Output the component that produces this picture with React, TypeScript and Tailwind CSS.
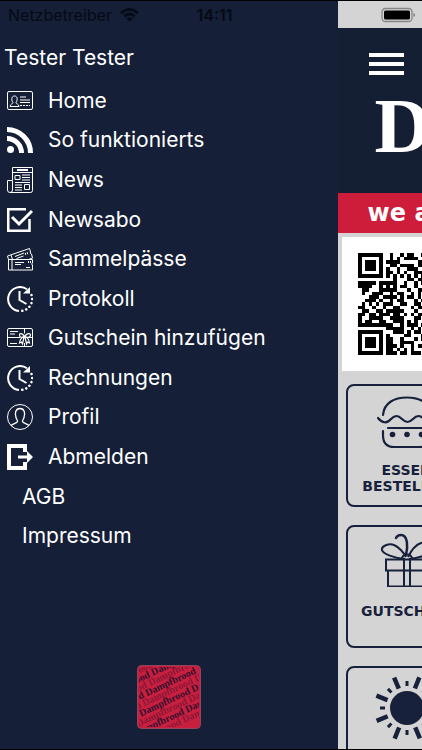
import React from 'react';

const HomeIcon = () => (
  <svg viewBox="0 0 26 26" className="size-[26px]" fill="none" stroke="currentColor" strokeWidth="1">
    <rect x="0.5" y="3.5" width="25" height="18" rx="1.5" />
    <path d="M3 18.5c0-2.5 3-2.5 3-4-1.6-1.5-2-6.500 1.500-6.500s3 5 1.500 6.500c0 1.500 3 1.500 3 4z" />
    <path d="M13 9h6M13 12h10M13 14.500h10" />
    <path d="M13 17.500h10" strokeDasharray="2 1" />
  </svg>
);

const FeedIcon = () => (
  <svg viewBox="0 0 26 26" className="size-[26px]" fill="none" stroke="currentColor" strokeWidth="5">
    <circle cx="3.500" cy="22.500" r="3.500" fill="currentColor" stroke="none" />
    <path d="M0 11.500A14.500 14.500 0 0 1 14.500 26M0 2.500A23.500 23.500 0 0 1 23.500 26" />
  </svg>
);

const NewsIcon = () => (
  <svg viewBox="0 0 26 26" className="size-[26px]" fill="none" stroke="currentColor" strokeWidth="1">
    <path d="M5.500 0.500h20v23q0 2-2 2H3q-2.500 0-2.500-2.500V13.500h5V23q0 2.500-2.500 2.500" />
    <path d="M5.500 13V0.500M5.500 5.500h20M8 8.500h5v4H8zM17.500 17.500h5v5h-5z" />
    <path d="M10 3h11" strokeWidth="2" />
    <path d="M15 8h8M15 10.500h8M15 13h8M8 15.500h15M8 18h7M8 20.500h7M8 23h7" />
  </svg>
);

const CheckIcon = () => (
  <svg viewBox="0 0 26 26" className="size-[26px]" fill="none" stroke="currentColor" strokeWidth="2.500">
    <path d="M19 2.250H1.250v21.500H22.500V12" />
    <path d="M5 10l7 7L25 4" strokeWidth="3" />
  </svg>
);

const PassIcon = () => (
  <svg viewBox="0 0 26 26" className="size-[26px]" fill="none" stroke="currentColor" strokeWidth="1">
    <path d="M1.500 13.500h24v3.500q-2 1 0 2v5h-24zM5 13.500v10.500" />
    <path d="M1.500 13.500L0.500 10 22.500 2.500l1 3.500q-1 1.500 1 2l1 4-4 1.500M4 9l1.500 4.500M8 10.500l9-3.500M9.500 12.500l7-2.500" />
    <path d="M8 16.500h9M8 18.500h6M19 21.500h4" />
    <path d="M21 16h3M18 8l3-1" strokeWidth="2" strokeDasharray="1 1" />
  </svg>
);

const ClockIcon = () => (
  <svg viewBox="0 0 26 26" className="size-[26px]" fill="none" stroke="currentColor" strokeWidth="2">
    <path d="M12 25A12 12 0 1 1 20 3.200" />
    <path d="M23 1v6.500h-7z" fill="currentColor" stroke="none" />
    <path d="M12.500 5v9l7 4" />
    <path d="M24.500 9A12 12 0 0 1 14 25" strokeWidth="2.500" strokeLinecap="round" strokeDasharray="0.100 4" />
  </svg>
);

const VoucherIcon = () => (
  <svg viewBox="0 0 26 26" className="size-[26px]" fill="none" stroke="currentColor" strokeWidth="1">
    <rect x="0.500" y="3.500" width="25" height="18" rx="1.500" />
    <path d="M3 6.500h8M3 9h5M0.500 12.500H13M21 12.500h4.500M17.500 3.500v5M17.500 18v3.500M3 18.500h7" />
    <g strokeWidth="1.200">
      <path d="M17.500 11.500c-2-3-5-4-5-1.500s2 3 5 1.500zM17.500 11.500c2-3 6-4 6-1.500s-3 3-6 1.500z" />
      <path d="M17 12c-3 0-4 3-4.500 6l2-1 1 2zM18 12c3 0 4 3 4.500 6l-2-1-1 2z" />
    </g>
  </svg>
);

const ProfileIcon = () => (
  <svg viewBox="0 0 26 26" className="size-[26px]" fill="none" stroke="currentColor" strokeWidth="1">
    <circle cx="13" cy="13" r="12.500" />
    <path d="M4 21.500c2-2 6-2 6.500-4 .3-1.500-1-2-1.500-4-1.500-4-.5-9 4-9s5.500 5 4 9c-.5 2-1.800 2.500-1.500 4 .5 2 4.500 2 6.500 4" strokeWidth="1.300" />
  </svg>
);

const LogoutIcon = () => (
  <svg viewBox="0 0 26 26" className="size-[26px]" fill="currentColor">
    <path d="M0 0h20v8h-4V4H4v18h12v-4h4v8H0z" />
    <path d="M11 11.500h9V7l6 6-6 6v-4.500h-9z" />
  </svg>
);

const menu: { label: string; icon?: React.FC }[] = [
  { label: 'Home', icon: HomeIcon },
  { label: 'So funktionierts', icon: FeedIcon },
  { label: 'News', icon: NewsIcon },
  { label: 'Newsabo', icon: CheckIcon },
  { label: 'Sammelpässe', icon: PassIcon },
  { label: 'Protokoll', icon: ClockIcon },
  { label: 'Gutschein hinzufügen', icon: VoucherIcon },
  { label: 'Rechnungen', icon: ClockIcon },
  { label: 'Profil', icon: ProfileIcon },
  { label: 'Abmelden', icon: LogoutIcon },
  { label: 'AGB' },
  { label: 'Impressum' },
];

const qrRows = [
  '11111110010010110010001111111',
  '10000010010101111001101000001',
  '10111010111100000110001011101',
  '10111010011011110111101011101',
  '10111010100100111000101011101',
  '10000010110101001111001000001',
  '11111110101010101010101111111',
  '00000000001000110110000000000',
  '11111011111001001011101101001',
  '11110010101011001001010110110',
  '01100011111000100110101010011',
  '01001110010110010101101101100',
  '00011101111010110101110010101',
  '00111010010110001011011010110',
  '01010101110011001101001101001',
  '11001001001100010110110110110',
  '01100110111110001000101011010',
  '11011011101101010111010100111',
  '10011110011110001101101101001',
  '10110011001110101001010010110',
  '11111111110010111010111111011',
  '00000000111110010101100010110',
  '11111110001110101101101010101',
  '10000010100001100011100010011',
  '10111010110010001011111110110',
  '10111010110011110001011010100',
  '10111010111010010110101101011',
  '10000010110101010001010110110',
  '11111110111011011101101001011',
];

const qrPath = qrRows
  .map((row, y) => [...row].map((cell, x) => (cell === '1' ? `M${x} ${y}h1v1h-1z` : '')).join(''))
  .join('');

const QrCode = () => (
  <svg viewBox="0 0 29 29" className="size-[102px] shrink-0" shapeRendering="crispEdges" role="img" aria-label="QR-Code">
    <path d={qrPath} />
  </svg>
);

const BurgerIcon = () => (
  <svg viewBox="0 0 60 54" className="h-[54px] w-[60px]" fill="none" stroke="currentColor" strokeWidth="2.200" strokeLinecap="round">
    <path d="M6 19C7 7 17 1.500 30 1.500S53 7 54 19" />
    <path d="M1 22c4 5 9 6 13 1 4-4 7-4 11 0s7 4 11 0 7-4 11 0 8 4 12-1" />
    <path d="M11 32h43M6 35v4c0 8 4 12 11 12h26c7 0 11-4 11-12v-4" />
    <g fill="currentColor" stroke="none">
      <circle cx="15.500" cy="38.500" r="2.800" />
      <circle cx="30" cy="38.500" r="2.800" />
      <circle cx="44.500" cy="38.500" r="2.800" />
    </g>
  </svg>
);

const GiftIcon = () => (
  <svg viewBox="0 0 60 54" className="h-[54px] w-[60px]" fill="none" stroke="currentColor" strokeWidth="2">
    <path d="M9 26.500h42v11H9zM11 37.500v16h38v-16M27 26.500v27M33 26.500v27" />
    <path d="M28 26C17 25 6 21 5 17s7-7 12-5 10 8 12 12M32 26c11-1 22-5 23-9s-5-9-11-7-10 8-13 14" />
    <path d="M29 22c2-8 2-20-5-20-2 0-4 1-5 3" strokeWidth="2.500" strokeLinecap="round" />
    <path d="M25 26c0-6 10-6 10 0" />
  </svg>
);

const SunIcon = () => (
  <svg viewBox="-32 -32 64 64" className="size-[64px]" stroke="currentColor" strokeLinecap="butt">
    <circle r="17" fill="currentColor" stroke="none" />
    {[22, 67, 112, 157, 202, 247, 292, 337].map((a) => (
      <path key={a} d="M0 -21V-33" strokeWidth="4.500" transform={`rotate(${a})`} />
    ))}
    {[0, 45, 90, 135, 180, 225, 270, 315].map((a) => (
      <path key={a} d="M0 -22V-27" strokeWidth="3" transform={`rotate(${a})`} />
    ))}
  </svg>
);

const Stamp = () => (
  <svg viewBox="0 0 64 64" className="size-[64px]" role="img" aria-label="Dampfbrood">
    <defs>
      <clipPath id="stamp">
        <rect x="2" y="2" width="60" height="60" rx="3" />
      </clipPath>
    </defs>
    <rect x="0.500" y="0.500" width="63" height="63" rx="4" fill="#c91f3f" stroke="#8d4560" />
    <g clipPath="url(#stamp)">
      <g transform="rotate(-25 32 32)" fontFamily="Liberation Serif, serif" fontSize="10" fontWeight="bold">
        {[0, 1, 2, 3, 4, 5, 6, 7, 8].map((i) => (
          <text key={i} x={-24 - i * 7} y={-2 + i * 8} fill={i % 2 ? '#30102e' : '#8a1737'}>
            Dampfbrood Dampfbrood Dampfbrood
          </text>
        ))}
      </g>
    </g>
  </svg>
);

const Card = ({ icon, children }: { icon: React.ReactNode; children?: React.ReactNode }) => (
  <button className="flex h-[123px] w-[122px] shrink-0 flex-col items-center rounded-lg border-2 border-[#17213b] text-sm leading-4 font-bold">
    {icon}
    {children}
  </button>
);

const Drawer = () => (
  <nav className="flex w-4/5 shrink-0 flex-col bg-[#151f37] font-[Inter,sans-serif] text-white">
    <div className="flex h-7 items-center text-base text-[#050a16]">
      <span className="pl-2">Netzbetreiber</span>
      <svg viewBox="0 0 20 15" className="ml-2 h-[14px] w-[19px]" fill="none" stroke="currentColor" strokeWidth="3">
        <path d="M1 5.500q9-8 18 0M4.500 9q5.500-5 11 0" />
        <path d="M10 14.500l-3.500-3.300q3.500-2.500 7 0z" fill="currentColor" stroke="none" />
      </svg>
      <span className="ml-auto pr-[105px] font-semibold">14:11</span>
    </div>
    <h1 className="mt-3 pl-1 text-[21px] leading-[34px]">Tester Tester</h1>
    <ul className="mt-1.5 grid h-[475px] shrink-0 auto-rows-fr">
      {menu.map(({ label, icon: Icon }) => (
        <li key={label} className="flex">
          <a href="#" className="flex flex-1 items-center text-[21px] leading-7">
            {Icon ? (
              <span className="w-12 pl-[7px]">
                <Icon />
              </span>
            ) : (
              <span className="w-[22px]" />
            )}
            {label}
          </a>
        </li>
      ))}
    </ul>
    <div className="mt-auto mb-5 flex justify-center">
      <Stamp />
    </div>
  </nav>
);

const Shop = () => (
  <main className="flex w-full shrink-0 flex-col overflow-hidden bg-[#d4d4d4] font-['DejaVu_Sans',sans-serif] text-[#17213b]">
    <div className="flex h-[27px] shrink-0 items-center pl-[43px]">
      <svg viewBox="0 0 34 16" className="h-4 w-[34px]">
        <rect x="1" y="1.500" width="30" height="13" rx="3.500" fill="none" stroke="#858585" strokeWidth="1.300" />
        <rect x="3" y="3.500" width="26" height="9" rx="1.500" />
        <path d="M32.500 6v4q1.500-.5 1.500-2t-1.500-2z" fill="#777" />
      </svg>
    </div>
    <header className="h-[165px] shrink-0 bg-[#151f33] pt-[25px] pl-[31px] text-white">
      <button aria-label="Menü" className="flex w-[35px] flex-col gap-[5px]">
        <span className="h-1 bg-white" />
        <span className="h-1 bg-white" />
        <span className="h-1 bg-white" />
      </button>
      <p className="mt-3 pl-1.5 font-['Liberation_Serif',serif] text-[78px] leading-[78px] font-bold">Dampfbrood</p>
    </header>
    <p className="h-10 shrink-0 bg-[#cd1d3a] pl-[30px] text-2xl leading-10 font-bold whitespace-nowrap text-white">
      we are open
    </p>
    <section className="m-1 mb-[13px] flex h-[134px] shrink-0 items-center bg-white pl-4">
      <QrCode />
    </section>
    <section className="flex flex-col gap-[18px] pl-2">
      <Card
        icon={
          <span className="mt-2.5">
            <BurgerIcon />
          </span>
        }
      >
        <span className="mt-3">
          ESSEN
          <br />
          BESTELLEN
        </span>
      </Card>
      <Card
        icon={
          <span className="mt-1.5">
            <GiftIcon />
          </span>
        }
      >
        <span className="mt-4">GUTSCHEIN</span>
      </Card>
      <Card
        icon={
          <span className="mt-2">
            <SunIcon />
          </span>
        }
      />
    </section>
  </main>
);

const App: React.FC = () => (
  <div className="flex h-screen overflow-hidden border-y border-black bg-[#151f37]">
    <Drawer />
    <Shop />
  </div>
);

export default App;
